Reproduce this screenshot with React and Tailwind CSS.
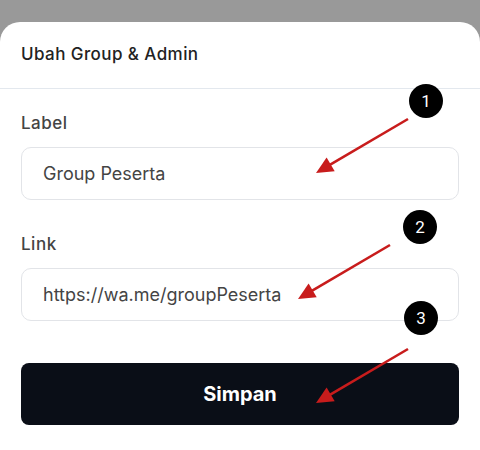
import React from 'react'

const fields = [
  { label: 'Label', value: 'Group Peserta' },
  { label: 'Link', value: 'https://wa.me/groupPeserta' },
]

// annotation markers drawn over the form
const marks = [
  { n: 1, cx: 426, cy: 101, x1: 408, y1: 119, x2: 316, y2: 173 },
  { n: 2, cx: 420, cy: 227, x1: 390, y1: 245, x2: 298, y2: 299 },
  { n: 3, cx: 421, cy: 318, x1: 408, y1: 349, x2: 316, y2: 403 },
]

function Arrow({ x1, y1, x2, y2 }) {
  const dx = x2 - x1
  const dy = y2 - y1
  const len = Math.hypot(dx, dy)
  const ux = dx / len
  const uy = dy / len
  const hl = 17
  const hw = 8
  const bx = x2 - ux * hl
  const by = y2 - uy * hl
  const p1 = `${bx - uy * hw},${by + ux * hw}`
  const p2 = `${bx + uy * hw},${by - ux * hw}`
  return (
    <g>
      <line x1={x1} y1={y1} x2={bx + ux * 2} y2={by + uy * 2} stroke="#c81c1c" strokeWidth="2.6" />
      <polygon points={`${x2},${y2} ${p1} ${p2}`} fill="#c81c1c" />
    </g>
  )
}

export default function App() {
  return (
    <div className="relative w-[480px] h-[450px] overflow-hidden bg-[#999999] pt-[22px] font-['Inter',sans-serif]">
      <div className="bg-white rounded-t-[20px] h-full">
        <div className="px-[21px] h-[67px] flex items-center border-b border-[#e3e8ee]">
          <h1 className="text-[17px] tracking-[0.025em] font-medium text-[#222]">Ubah Group &amp; Admin</h1>
        </div>

        <div className="px-[21px] pt-[23px] flex flex-col">
          {fields.map((f, i) => (
            <div key={f.label} className={i > 0 ? 'mt-[33px]' : ''}>
              <div className="text-[17px] tracking-[0.03em] leading-[22px] font-medium text-[#444]">{f.label}</div>
              <div className="mt-[13px] h-[53px] rounded-[10px] border border-[#e2e4e8] flex items-center px-[21px] text-[18px] text-[#444]">
                {f.value}
              </div>
            </div>
          ))}

          <button className="mt-[42px] h-[62px] rounded-[8px] bg-[#0a0e17] text-white text-[20px] font-bold">
            Simpan
          </button>
        </div>
      </div>

      <svg className="absolute inset-0" width="480" height="450">
        {marks.map(m => (
          <g key={m.n}>
            <Arrow {...m} />
            <circle cx={m.cx} cy={m.cy} r="17" fill="#000" />
            <text x={m.cx} y={m.cy + 6} textAnchor="middle" fill="#fff" fontSize="17" fontFamily="Roboto, sans-serif">{m.n}</text>
          </g>
        ))}
      </svg>
    </div>
  )
}
